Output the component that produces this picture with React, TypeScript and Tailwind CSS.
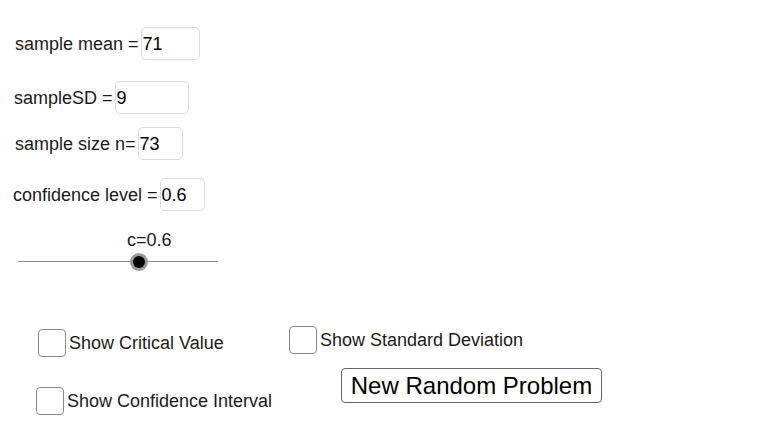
// App.tsx
// GeoGebra-style applet: input fields, a slider, checkboxes and a button.

const font = "font-['Liberation_Sans',Arial,sans-serif]";

type FieldProps = { label: string; value: string; boxClass: string; rowClass: string };

function Field({ label, value, boxClass, rowClass }: FieldProps) {
  return (
    <div className={`flex h-[33px] items-center gap-[2px] ${rowClass}`}>
      <span className="pt-[2px] text-[18px] text-[#1a1a1a]">{label}</span>
      <div
        className={`flex h-[33px] items-center rounded-[5px] border border-[#dcdcdc] bg-white pl-[1px] pt-[2px] text-[18px] text-black ${boxClass}`}
      >
        {value}
      </div>
    </div>
  );
}

function Check({ label, className }: { label: string; className: string }) {
  return (
    <label className={`flex items-center gap-[3px] ${className}`}>
      <span className="block h-[28px] w-[28px] shrink-0 rounded-[4px] border border-[#8a8a8a] bg-white" />
      <span className="pt-[1px] text-[18px] text-[#1a1a1a]">{label}</span>
    </label>
  );
}

export default function App() {
  return (
    <div className={`flex h-[431px] w-[759px] flex-col overflow-hidden bg-white pt-[27px] ${font}`}>
      <Field label="sample mean =" value="71" rowClass="ml-[15px]" boxClass="w-[59px]" />
      <Field label="sampleSD =" value="9" rowClass="ml-[14px] mt-[21px]" boxClass="w-[74px]" />
      <Field label="sample size n=" value="73" rowClass="ml-[15px] mt-[13px]" boxClass="w-[45px]" />
      <Field label="confidence level =" value="0.6" rowClass="ml-[13px] mt-[18px]" boxClass="w-[45px]" />

      {/* slider */}
      <div className="ml-[18px] mt-[18px] flex w-[200px] flex-col">
        <span className="ml-[109px] h-[22px] text-[18px] leading-[22px] text-[#1a1a1a]">c=0.6</span>
        <div className="relative mt-[1px] h-[18px]">
          <div className="absolute inset-x-0 top-[9px] h-[1px] bg-[#8c8c8c]" />
          <div className="absolute left-[112px] top-[1px] flex h-[18px] w-[18px] items-center justify-center rounded-full bg-[#9a9a9a]">
            <div className="h-[12px] w-[12px] rounded-full bg-black" />
          </div>
        </div>
      </div>

      {/* options */}
      <div className="mt-[56px] flex items-start">
        <Check label="Show Critical Value" className="ml-[38px] mt-[3px] w-[251px]" />
        <Check label="Show Standard Deviation" className="" />
      </div>
      <div className="mt-[11px] flex items-start">
        <Check label="Show Confidence Interval" className="ml-[36px] mt-[19px] w-[305px]" />
        <button className="flex h-[35px] w-[261px] items-center justify-center rounded-[4px] border border-[#666] bg-white pt-[1px] text-[24px] text-black">
          New Random Problem
        </button>
      </div>
    </div>
  );
}
